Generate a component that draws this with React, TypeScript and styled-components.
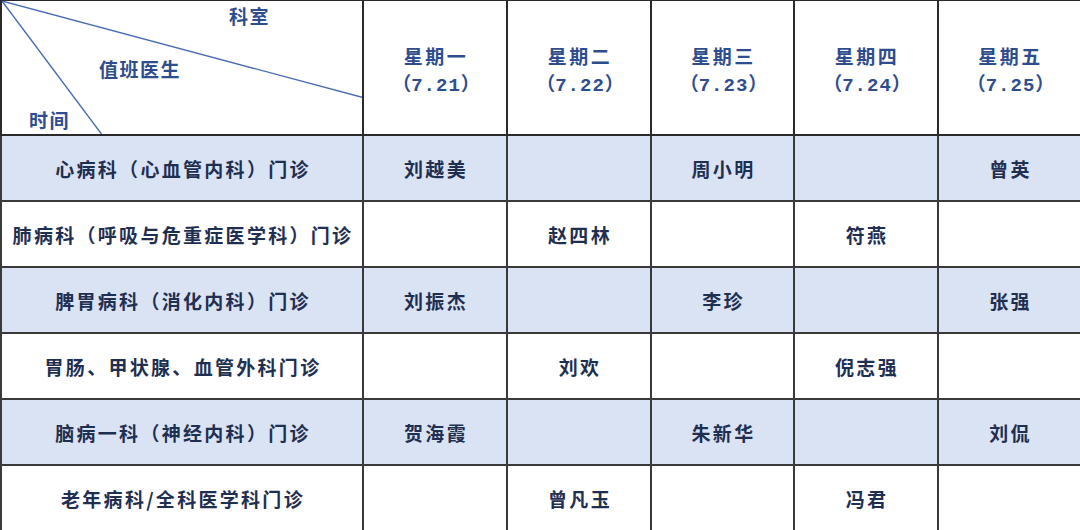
import React from "react";
import styled, { createGlobalStyle } from "styled-components";

const GlobalStyle = createGlobalStyle`
  html, body {
    margin: 0;
    padding: 0;
    background: #ffffff;
  }
  body {
    font-family: "Noto Sans CJK SC", "Noto Sans", sans-serif;
  }
`;

const days = [
  { name: "星期一", date: "7.21" },
  { name: "星期二", date: "7.22" },
  { name: "星期三", date: "7.23" },
  { name: "星期四", date: "7.24" },
  { name: "星期五", date: "7.25" },
];

const rows: { dept: string; doctors: string[] }[] = [
  { dept: "心病科（心血管内科）门诊", doctors: ["刘越美", "", "周小明", "", "曾英"] },
  { dept: "肺病科（呼吸与危重症医学科）门诊", doctors: ["", "赵四林", "", "符燕", ""] },
  { dept: "脾胃病科（消化内科）门诊", doctors: ["刘振杰", "", "李珍", "", "张强"] },
  { dept: "胃肠、甲状腺、血管外科门诊", doctors: ["", "刘欢", "", "倪志强", ""] },
  { dept: "脑病一科（神经内科）门诊", doctors: ["贺海霞", "", "朱新华", "", "刘侃"] },
  { dept: "老年病科/全科医学科门诊", doctors: ["", "曾凡玉", "", "冯君", ""] },
];

export default function App() {
  return (
    <>
      <GlobalStyle />
      <Table>
        <colgroup>
          <col style={{ width: 362 }} />
          <col style={{ width: 144 }} />
          <col style={{ width: 144 }} />
          <col style={{ width: 143 }} />
          <col style={{ width: 144 }} />
          <col style={{ width: 143 }} />
        </colgroup>
        <thead>
          <tr>
            <CornerCell>
              <Diagonals viewBox="0 0 362 134" preserveAspectRatio="none">
                <line x1="0" y1="0" x2="362" y2="97" stroke="#4a6cb3" strokeWidth="1.4" />
                <line x1="0" y1="0" x2="100" y2="134" stroke="#4a6cb3" strokeWidth="1.4" />
              </Diagonals>
              <CornerLabel $left={227} $top={2}>科室</CornerLabel>
              <CornerLabel $left={97} $top={55}>值班医生</CornerLabel>
              <CornerLabel $left={27} $top={106}>时间</CornerLabel>
            </CornerCell>
            {days.map((d) => (
              <DayCell key={d.date}>
                <DayName>{d.name}</DayName>
                <DayDate>
                  （<Digits>{d.date}</Digits>）
                </DayDate>
              </DayCell>
            ))}
          </tr>
        </thead>
        <tbody>
          {rows.map((r, i) => (
            <Row key={r.dept} $shaded={i % 2 === 0}>
              <DeptCell>{r.dept}</DeptCell>
              {r.doctors.map((doc, j) => (
                <DoctorCell key={j}>{doc}</DoctorCell>
              ))}
            </Row>
          ))}
        </tbody>
      </Table>
    </>
  );
}

const Table = styled.table`
  width: 1080px;
  height: 530px;
  border-collapse: collapse;
  table-layout: fixed;
  border: 2px solid #222;
  border-top-width: 1px;
  font-weight: 700;
`;

const CornerCell = styled.th`
  position: relative;
  height: 133px;
  padding: 0;
  border: 2px solid #2a2a2a;
  border-top-width: 1px;
`;

const Diagonals = styled.svg`
  position: absolute;
  inset: 0;
  width: 100%;
  height: 100%;
`;

const CornerLabel = styled.span<{ $left: number; $top: number }>`
  position: absolute;
  left: ${(p) => p.$left}px;
  top: ${(p) => p.$top}px;
  font-size: 19px;
  line-height: 26px;
  letter-spacing: 1.5px;
  color: #2e4d8e;
  font-weight: 700;
`;

const DayCell = styled.th`
  border: 2px solid #2a2a2a;
  border-top-width: 1px;
  text-align: center;
  vertical-align: middle;
  color: #2e4d8e;
  padding: 6px 0 0 2px;
`;

const DayName = styled.div`
  font-size: 19px;
  line-height: 27px;
  letter-spacing: 2.5px;
`;

const DayDate = styled.div`
  font-size: 19px;
  line-height: 27px;
`;

const Digits = styled.span`
  font-family: "Liberation Mono", "DejaVu Sans Mono", monospace;
  font-size: 19px;
  font-weight: 700;
  letter-spacing: 1px;
`;

const Row = styled.tr<{ $shaded: boolean }>`
  height: 66px;
  background: ${(p) => (p.$shaded ? "#dae3f3" : "#ffffff")};
`;

const DeptCell = styled.td`
  padding: 0 0 0 2px;
  border: 2px solid #3a3a3a;
  text-align: center;
  font-size: 19px;
  letter-spacing: 2.3px;
  color: #1f2f52;
`;

const DoctorCell = styled.td`
  padding: 0 0 0 2px;
  border: 2px solid #3a3a3a;
  text-align: center;
  font-size: 19px;
  letter-spacing: 2.3px;
  color: #1f2f52;
`;
